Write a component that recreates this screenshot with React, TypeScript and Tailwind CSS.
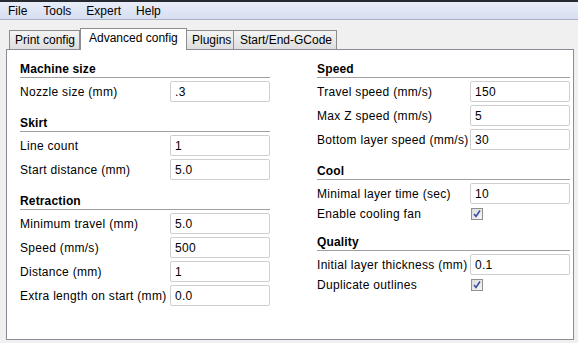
import React from "react";

type Row = { label: string; value?: string; check?: boolean };
type Section = { title: string; rows: Row[] };

const left: Section[] = [
  { title: "Machine size", rows: [{ label: "Nozzle size (mm)", value: ".3" }] },
  {
    title: "Skirt",
    rows: [
      { label: "Line count", value: "1" },
      { label: "Start distance (mm)", value: "5.0" },
    ],
  },
  {
    title: "Retraction",
    rows: [
      { label: "Minimum travel (mm)", value: "5.0" },
      { label: "Speed (mm/s)", value: "500" },
      { label: "Distance (mm)", value: "1" },
      { label: "Extra length on start (mm)", value: "0.0" },
    ],
  },
];

const right: Section[] = [
  {
    title: "Speed",
    rows: [
      { label: "Travel speed (mm/s)", value: "150" },
      { label: "Max Z speed (mm/s)", value: "5" },
      { label: "Bottom layer speed (mm/s)", value: "30" },
    ],
  },
  {
    title: "Cool",
    rows: [
      { label: "Minimal layer time (sec)", value: "10" },
      { label: "Enable cooling fan", check: true },
    ],
  },
  {
    title: "Quality",
    rows: [
      { label: "Initial layer thickness (mm)", value: "0.1" },
      { label: "Duplicate outlines", check: true },
    ],
  },
];

function CheckBox() {
  return (
    <div className="ml-[1px] w-[12px] h-[12px] border border-[#8f8f8f] bg-gradient-to-br from-[#dcdcdc] to-[#f7f7f7] flex items-center justify-center">
      <svg width="10" height="10" viewBox="0 0 10 10">
        <path d="M2 5 L4 7.5 L8 1.5" fill="none" stroke="#3b4fa0" strokeWidth="1.6" />
      </svg>
    </div>
  );
}

function Column({ sections }: { sections: Section[] }) {
  return (
    <div className="flex flex-col">
      {sections.map((s, i) => (
        <div key={s.title} className={i > 0 ? "mt-[13px]" : ""}>
          <div className="h-[17px] border-b border-[#a0a0a0] font-bold leading-[16px] tracking-[0.15px]">{s.title}</div>
          <div className="flex flex-col gap-[3px] mt-[3px]">
            {s.rows.map((r) =>
              r.check ? (
                <div key={r.label} className="h-[14px] flex items-center justify-between">
                  <span className="tracking-[0.3px]">{r.label}</span>
                  <div className="w-[100px]">
                    <CheckBox />
                  </div>
                </div>
              ) : (
                <div key={r.label} className="h-[21px] flex items-center justify-between">
                  <span className="whitespace-nowrap tracking-[0.3px]">{r.label}</span>
                  <div className="w-[100px] h-[21px] border border-[#cfcfcf] rounded-[2px] bg-white pl-[4px] flex items-center tracking-[0.3px]">
                    {r.value}
                  </div>
                </div>
              )
            )}
          </div>
        </div>
      ))}
    </div>
  );
}

export default function App() {
  const tabs = ["Print config", "Advanced config", "Plugins", "Start/End-GCode"];
  return (
    <div
      className="w-[578px] h-[343px] bg-[#f0f0f0] text-black text-[12px] overflow-hidden"
      style={{ fontFamily: '"Liberation Sans", Arial, sans-serif' }}
    >
      {/* Menu bar */}
      <div className="border-t-2 border-[#262a33] h-[20px] bg-gradient-to-b from-[#e8edf8] to-[#d6def1] border-b border-b-[#a8b0c0] flex items-center">
        <span className="ml-[8px]">File</span>
        <span className="ml-[16px]">Tools</span>
        <span className="ml-[15px]">Expert</span>
        <span className="ml-[15px]">Help</span>
      </div>

      {/* Tabs */}
      <div className="mt-[7px] pl-[9px] flex items-end h-[22px]">
        <div className="w-[71px] h-[19px] border border-[#8d8d8d] border-b-0 bg-gradient-to-b from-[#f4f4f4] to-[#dedede] pl-[5px] leading-[18px]">
          {tabs[0]}
        </div>
        <div className="relative z-10 w-[107px] h-[22px] border border-[#8d8d8d] border-b-0 bg-white pl-[8px] leading-[18px] -mb-px">
          {tabs[1]}
        </div>
        <div className="w-[47px] h-[19px] border border-[#8d8d8d] border-b-0 border-l-0 bg-gradient-to-b from-[#f4f4f4] to-[#dedede] pl-[5px] leading-[18px]">
          {tabs[2]}
        </div>
        <div className="w-[103px] h-[19px] border border-[#8d8d8d] border-b-0 border-l-0 bg-gradient-to-b from-[#f4f4f4] to-[#dedede] pl-[6px] leading-[18px]">
          {tabs[3]}
        </div>
      </div>

      {/* Panel */}
      <div className="ml-[6px] w-[568px] h-[291px] border border-[#898c95] bg-white pt-[11px] pl-[13px]">
        <div className="grid grid-cols-[250px_253px] gap-x-[47px]">
          <Column sections={left} />
          <Column sections={right} />
        </div>
      </div>
    </div>
  );
}
